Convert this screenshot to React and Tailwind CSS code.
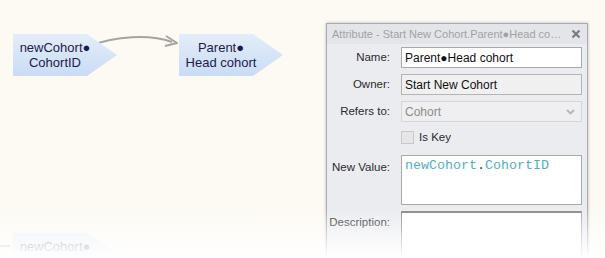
import React from 'react';

const uiFont = { fontFamily: '"Liberation Sans", Arial, sans-serif' };

// Pointed diagram node (tag shape)
const Node = ({ x, y, lines, id }) => (
  <div className="absolute" style={{ left: x, top: y }}>
    <svg width="104" height="42" className="absolute left-0 top-0">
      <defs>
        <linearGradient id={id} x1="0" y1="0" x2="0" y2="1">
          <stop offset="0" stopColor="#e4edfa" />
          <stop offset="1" stopColor="#c9dcf5" />
        </linearGradient>
      </defs>
      <polygon points="0,0 74,0 104,21 74,42 0,42" fill={`url(#${id})`} />
    </svg>
    <div className="relative flex h-[42px] w-[84px] flex-col items-center justify-center text-[13px] leading-[15px] text-[#1d1b4c]">
      {lines.map((l, i) => (
        <span key={i}>{l}</span>
      ))}
    </div>
  </div>
);

const Label = ({ children, top }) => (
  <div className={`pr-[11px] text-right text-[11.5px] text-[#2b2b2b] ${top || 'flex items-center justify-end'}`}>
    {children}
  </div>
);

export default function App() {
  return (
    <div className="relative h-[258px] w-[605px] overflow-hidden bg-[#fdfaf3]" style={uiFont}>
      {/* connector */}
      <svg width="605" height="258" className="absolute left-0 top-0">
        <path d="M90 46 C 115 36, 150 34, 172 42" fill="none" stroke="#a4a4a4" strokeWidth="2" />
        <path d="M166 36 L177 43 L165 46" fill="none" stroke="#a4a4a4" strokeWidth="2" strokeLinejoin="round" />
        <path d="M0 246 L10 246" stroke="#c0c0c0" strokeWidth="2" />
      </svg>

      <Node x={13} y={34} id="n1" lines={['newCohort●', 'CohortID']} />
      <Node x={179} y={34} id="n2" lines={['Parent●', 'Head cohort']} />
      <div className="absolute left-[13px] top-[233px] opacity-60">
        <Node x={0} y={0} id="n3" lines={['newCohort●', '\u00a0']} />
      </div>

      {/* property window */}
      <div className="absolute left-[326px] top-[23px] h-[250px] w-[262px] border border-[#a9aab3] bg-[#ebecf0] shadow-[0_0_3px_rgba(0,0,0,0.25)]">
        <div className="flex h-[20px] items-center justify-between bg-[#e4e5e9] pl-[5px] pr-[6px] text-[11px] text-[#a2a2a2]">
          <span className="overflow-hidden whitespace-nowrap">Attribute - Start New Cohort.Parent●Head co…</span>
          <svg width="10" height="10" viewBox="0 0 10 10" className="ml-2 shrink-0">
            <path d="M1.5 1.5 L8.5 8.5 M8.5 1.5 L1.5 8.5" stroke="#7c7c7c" strokeWidth="2.2" />
          </svg>
        </div>

        <div className="grid grid-cols-[74px_1fr] gap-y-[6px] pr-[5px] pt-[3px]">
          <Label>Name:</Label>
          <div className="flex h-[21px] items-center border border-[#a9a9a9] bg-white px-[3px] text-[12px] text-[#111]">Parent●Head cohort</div>

          <Label>Owner:</Label>
          <div className="flex h-[21px] items-center border border-[#b4b4b4] bg-[#f0f0f0] px-[3px] text-[12px] text-[#111]">Start New Cohort</div>

          <Label>Refers to:</Label>
          <div className="flex h-[21px] items-center justify-between border border-[#d6d6d6] bg-[#efeff1] px-[3px] text-[12px] text-[#8c8c8c]">
            <span>Cohort</span>
            <svg width="9" height="6" viewBox="0 0 9 6" className="mr-[3px]">
              <path d="M1 1 L4.5 4.5 L8 1" fill="none" stroke="#b5b5b5" strokeWidth="1.8" />
            </svg>
          </div>

          <div />
          <div className="mt-[1px] flex items-center gap-[5px] text-[11.5px] text-[#2b2b2b]">
            <span className="h-[13px] w-[13px] border border-[#c8c8c8] bg-[#e6e6e8]" />
            <span>Is Key</span>
          </div>

          <Label top="pt-[7px]">New Value:</Label>
          <div className="mt-[3px] h-[50px] border border-[#a9a9a9] bg-white px-[3px] pt-[1px] text-[13.33px] leading-[17px] text-[#4fb0bf]" style={{ fontFamily: '"Liberation Mono", "Courier New", monospace' }}>
            newCohort<span className="text-[#2030e0]">.</span>CohortID
          </div>

          <Label top="pt-[3px]">Description:</Label>
          <div className="h-[60px] border border-[#a9a9a9] border-l-[#8a8a8a] border-t-2 border-t-[#8a8a8a] bg-white" />
        </div>
      </div>

      {/* bottom fade */}
      <div className="pointer-events-none absolute bottom-0 left-0 h-[50px] w-full bg-gradient-to-b from-transparent to-white" />
    </div>
  );
}
